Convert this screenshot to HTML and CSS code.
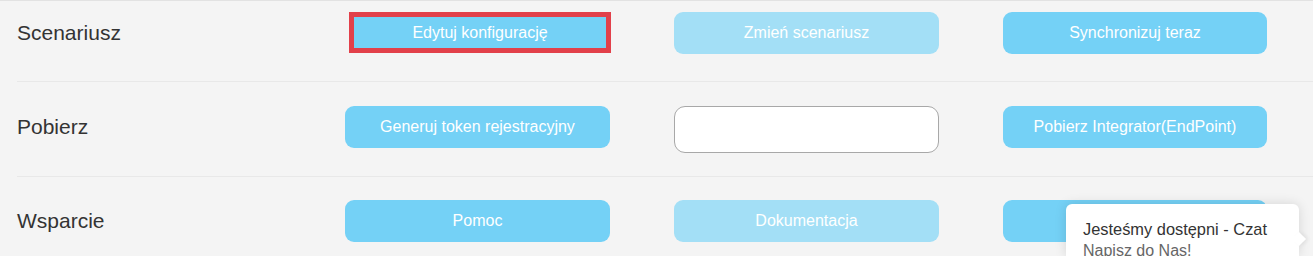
FILE: index.html
```html
<!DOCTYPE html>
<html lang="pl">
<head>
<meta charset="utf-8">
<link rel="stylesheet" href="styles.css">
</head>
<body>
<div class="panel">
  <div class="row row-first">
    <div class="label">Scenariusz</div>
    <button class="btn btn-focused">Edytuj konfigurację</button>
    <button class="btn btn-light">Zmień scenariusz</button>
    <button class="btn">Synchronizuj teraz</button>
  </div>
  <div class="row row-mid">
    <div class="label">Pobierz</div>
    <button class="btn">Generuj token rejestracyjny</button>
    <input class="field" type="text">
    <button class="btn">Pobierz Integrator(EndPoint)</button>
  </div>
  <div class="row row-last">
    <div class="label">Wsparcie</div>
    <button class="btn">Pomoc</button>
    <button class="btn btn-light">Dokumentacja</button>
    <button class="btn" aria-label="Kontakt"></button>
  </div>
</div>
<div class="chat">
  <div class="chat-title">Jesteśmy dostępni - Czat</div>
  <div class="chat-sub">Napisz do Nas!</div>
</div>
<span class="chat-arrow"></span>
</body>
</html>
```
FILE: styles.css
```css
html, body {
  margin: 0;
  padding: 0;
  background: #f4f4f4;
  font-family: "Liberation Sans", Arial, sans-serif;
  overflow: hidden;
  height: 256px;
}
.panel {
  border-top: 1px solid #e2e2e2;
}
.row {
  display: grid;
  grid-template-columns: 264px 265px 265px 264px;
  column-gap: 64px;
  align-items: start;
  margin-left: 17px;
  border-bottom: 1px solid #e8e8e8;
}
.row-first { padding: 11px 0 27px; }
.row-mid { padding: 24px 0 23px; }
.row-last { padding: 23px 0 0; border-bottom: none; }
.label {
  font-size: 21px;
  line-height: 42px;
  height: 42px;
  color: #333;
}
.btn {
  height: 42px;
  border: none;
  border-radius: 9px;
  background: #74d1f6;
  color: #fff;
  font-family: "Liberation Sans", Arial, sans-serif;
  font-size: 16px;
  padding: 0;
  margin: 0;
}
.btn-light {
  background: #a3dff6;
}
.btn-focused {
  margin-left: 4px;
  width: 262px;
  height: 41px;
  border: 5px solid #e2404a;
  border-radius: 0;
  box-sizing: border-box;
}
.field {
  height: 47px;
  box-sizing: border-box;
  border: 1px solid #a8a8a8;
  border-radius: 11px;
  background: #fff;
  margin: 0;
  padding: 0 10px;
  width: 265px;
}
.chat {
  position: absolute;
  left: 1066px;
  top: 204px;
  width: 233px;
  height: 52px;
  overflow: hidden;
  background: #fff;
  border-radius: 6px 6px 0 0;
  box-shadow: 0 0 12px rgba(0,0,0,0.13);
  padding: 14px 0 0 17px;
  box-sizing: border-box;
}
.chat-title {
  font-size: 16.4px;
  line-height: 22px;
  color: #333;
}
.chat-sub {
  font-size: 16px;
  line-height: 22px;
  color: #666;
}
.chat-arrow {
  position: absolute;
  left: 1294px;
  top: 234px;
  width: 10px;
  height: 10px;
  background: #fff;
  transform: rotate(45deg);
  box-shadow: 2px -2px 4px rgba(0,0,0,0.06);
}
```
